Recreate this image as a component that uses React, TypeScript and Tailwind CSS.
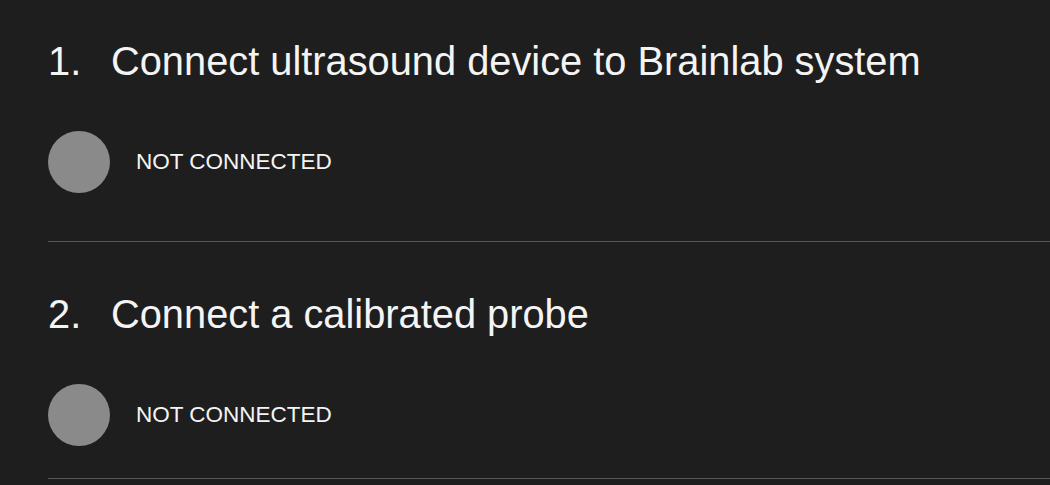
import React from "react";

function Step({ n, title, status, bottomGap }: { n: string; title: string; status: string; bottomGap: string }) {
  return (
    <div className="flex flex-col">
      <div className="flex items-start text-[39.8px] leading-[40px] text-[#f4f4f4]">
        <span className="w-[63px] shrink-0">{n}</span>
        <span>{title}</span>
      </div>
      <div className="mt-[50px] flex items-center">
        <div className="h-[62px] w-[62px] shrink-0 rounded-full bg-[#8a8a8a]" />
        <span className="ml-[26px] text-[22.5px] leading-[22px] text-[#f4f4f4]">{status}</span>
      </div>
      <div className={`${bottomGap} h-px bg-[#585858]`} />
    </div>
  );
}

export default function App() {
  return (
    <div
      className="h-[485px] w-[1050px] overflow-hidden bg-[#1e1e1e] pl-[48px]"
      style={{ fontFamily: '"Liberation Sans", Arial, sans-serif' }}
    >
      <div className="pt-[41px]">
        <Step n="1." title="Connect ultrasound device to Brainlab system" status="NOT CONNECTED" bottomGap="mt-[48px]" />
      </div>
      <div className="pt-[52px]">
        <Step n="2." title="Connect a calibrated probe" status="NOT CONNECTED" bottomGap="mt-[32px]" />
      </div>
    </div>
  );
}
